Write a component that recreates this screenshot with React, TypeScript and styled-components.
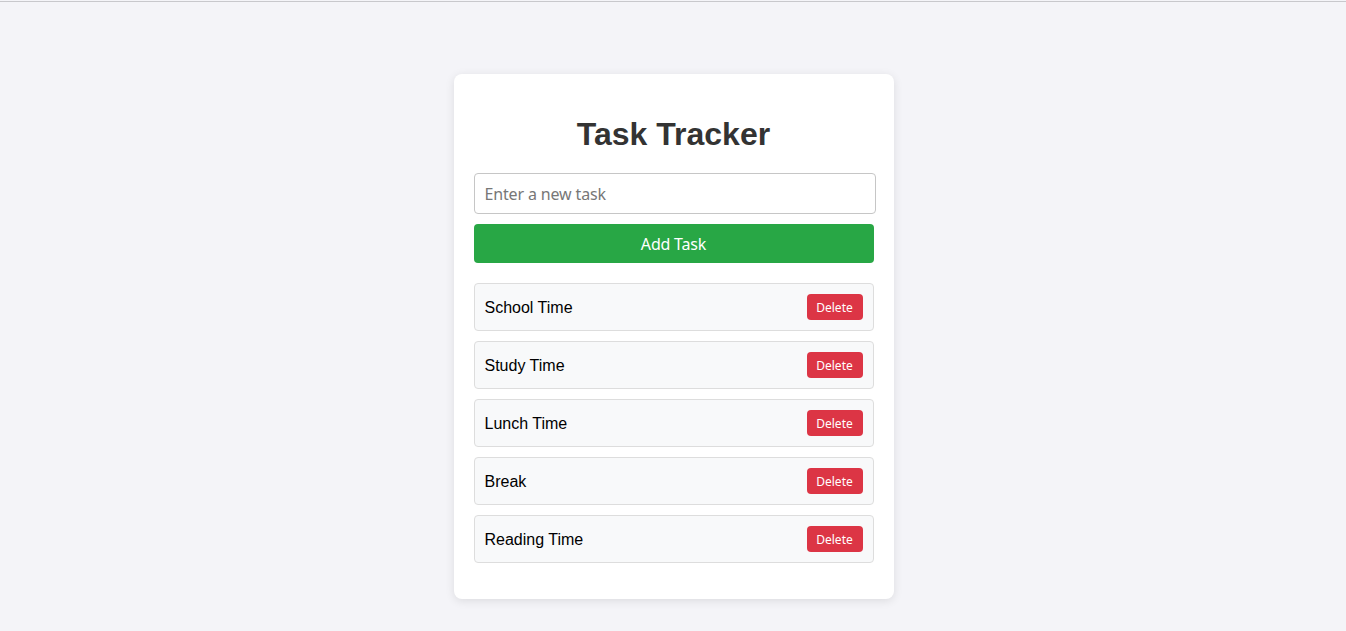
import React, { useState } from "react";
import styled, { createGlobalStyle } from "styled-components";

const Global = createGlobalStyle`
  html, body { margin: 0; padding: 0; }
  body {
    background: #f4f4f8;
    font-family: "Liberation Sans", Arial, sans-serif;
  }
`;

const TopRule = styled.div`
  height: 1px;
  margin-top: 1px;
  background: #c8c8cc;
`;

const Page = styled.div`
  display: flex;
  justify-content: center;
  padding: 72px 0 32px 1px;
`;

const Card = styled.div`
  width: 440px;
  box-sizing: border-box;
  background: #ffffff;
  border-radius: 8px;
  box-shadow: 0 2px 10px rgba(0, 0, 0, 0.1);
  padding: 20px 20px 36px;
  display: flex;
  flex-direction: column;
`;

const Title = styled.h1`
  margin: 22px 0 20px;
  text-align: center;
  font-family: "Liberation Sans", Arial, sans-serif;
  font-size: 32px;
  font-weight: 700;
  line-height: 37px;
  color: #333333;
`;

const Input = styled.input`
  width: 402px;
  height: 41px;
  box-sizing: border-box;
  padding: 0 10px;
  border: 1px solid #c6c6c6;
  border-radius: 4px;
  font-family: "Noto Sans", "Open Sans", sans-serif;
  font-size: 16px;
  letter-spacing: -0.15px;
  color: #333;
  outline: none;
  &::placeholder { color: #777777; }
`;

const AddButton = styled.button`
  margin-top: 10px;
  width: 400px;
  height: 39px;
  border: none;
  border-radius: 4px;
  background: #28a745;
  color: #ffffff;
  font-family: "Noto Sans", "Open Sans", sans-serif;
  font-size: 16px;
  letter-spacing: -0.2px;
  cursor: pointer;
`;

const List = styled.ul`
  list-style: none;
  margin: 20px 0 0;
  padding: 0;
  display: flex;
  flex-direction: column;
  gap: 10px;
`;

const Item = styled.li`
  height: 48px;
  box-sizing: border-box;
  display: flex;
  align-items: center;
  justify-content: space-between;
  padding: 1px 10px 0;
  background: #f8f9fa;
  border: 1px solid #dddddd;
  border-radius: 4px;
  font-family: "Liberation Sans", Arial, sans-serif;
  font-size: 16px;
  color: #000;
`;

const DeleteButton = styled.button`
  width: 56px;
  height: 26px;
  margin-top: -1px;
  border: none;
  border-radius: 4px;
  background: #dc3545;
  color: #ffffff;
  font-family: "Noto Sans", "Open Sans", sans-serif;
  font-size: 12px;
  padding: 0;
  cursor: pointer;
`;

export default function App() {
  const [tasks, setTasks] = useState<string[]>([
    "School Time",
    "Study Time",
    "Lunch Time",
    "Break",
    "Reading Time",
  ]);
  const [text, setText] = useState("");

  return (
    <>
      <Global />
      <TopRule />
      <Page>
        <Card>
          <Title>Task Tracker</Title>
          <Input
            placeholder="Enter a new task"
            value={text}
            onChange={(e) => setText(e.target.value)}
          />
          <AddButton
            onClick={() => {
              if (text.trim()) {
                setTasks([...tasks, text.trim()]);
                setText("");
              }
            }}
          >
            Add Task
          </AddButton>
          <List>
            {tasks.map((t, i) => (
              <Item key={i}>
                <span>{t}</span>
                <DeleteButton onClick={() => setTasks(tasks.filter((_, j) => j !== i))}>
                  Delete
                </DeleteButton>
              </Item>
            ))}
          </List>
        </Card>
      </Page>
    </>
  );
}
